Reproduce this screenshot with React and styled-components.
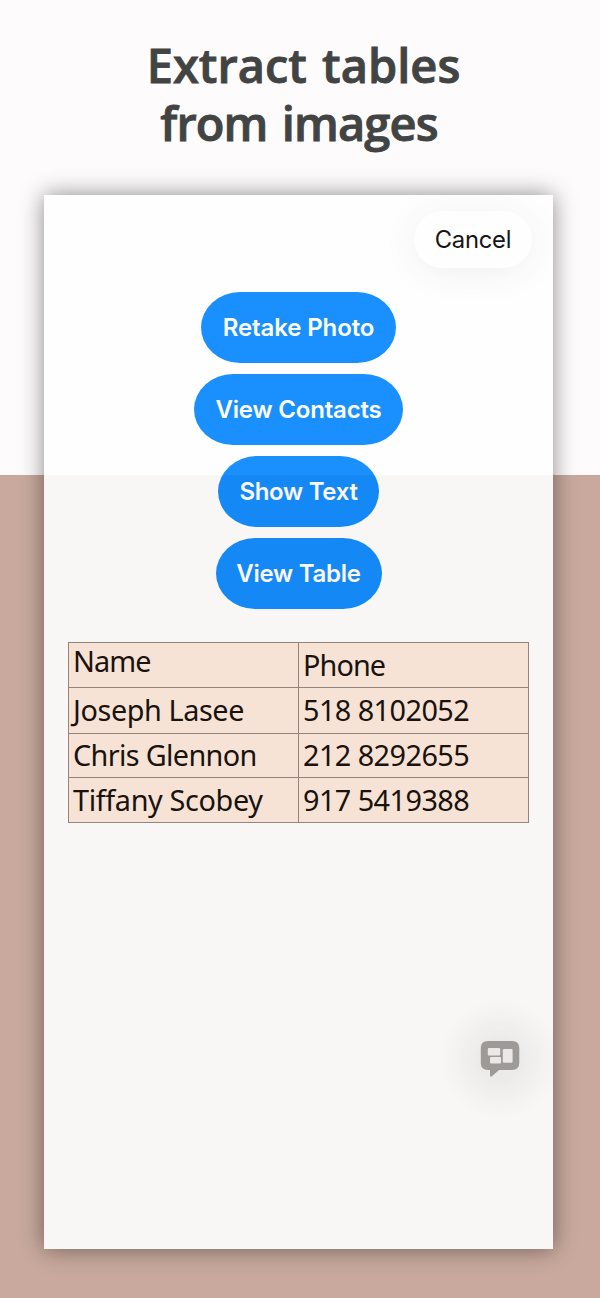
import React from "react";
import styled, { createGlobalStyle } from "styled-components";

const GlobalStyle = createGlobalStyle`
  * { box-sizing: border-box; }
  body { margin: 0; background: #fdfbfc; }
`;

const Page = styled.main`
  width: 600px;
  height: 1298px;
  overflow: hidden;
  padding: 36px 47px 0 44px;
  background: linear-gradient(#fdfbfc 0 475px, #c9a99d 475px);
`;

const Heading = styled.h1`
  margin: 0;
  height: 159px;
  display: flex;
  flex-direction: column;
  align-items: center;
  font: 600 47px/58px "Open Sans", sans-serif;
  color: #424443;
  -webkit-text-stroke: 0.9px #424443;
  word-spacing: 3px;
`;

const HeadingLine = styled.span`
  white-space: nowrap;
  letter-spacing: ${(p) => p.$spacing}px;
  padding-left: ${(p) => p.$shift}px;
`;

const Frame = styled.div`
  width: 509px;
  height: 1054px;
  box-shadow: 0 0 22px rgba(0, 0, 0, 0.45);
`;

const Screen = styled.section`
  height: 100%;
  overflow: hidden;
  opacity: 0.91;
  background: linear-gradient(#fff 0 280px, #fdfffe 280px);
  display: flex;
  flex-direction: column;
  font-family: Inter, sans-serif;
`;

const TopBar = styled.header`
  display: flex;
  justify-content: flex-end;
  padding: 16px 21px 0 0;
  height: 96px;
`;

const CancelButton = styled.button`
  width: 118px;
  height: 57px;
  padding: 0;
  border: 0;
  border-radius: 29px;
  background: #fff;
  color: #000;
  font: 400 23.8px/57px Inter, sans-serif;
  letter-spacing: -0.25px;
  box-shadow: 0 4px 36px rgba(0, 0, 0, 0.07);
`;

const Actions = styled.div`
  display: flex;
  flex-direction: column;
  align-items: center;
  gap: 11px;
  padding-top: 1px;
`;

const ActionButton = styled.button`
  width: ${(p) => p.$width}px;
  height: 71px;
  padding: 0;
  border: 0;
  border-radius: 39px / 35.5px;
  background: #0386ff;
  color: #fff;
  font: 600 24px/71px Inter, sans-serif;
  letter-spacing: ${(p) => p.$spacing}px;
  white-space: nowrap;
`;

const Table = styled.div`
  margin: 33px 0 0 24px;
  width: 461px;
  display: grid;
  grid-template-columns: 229px 229px;
  grid-template-rows: 44px 45px 43px 44px;
  gap: 1px;
  padding: 1px;
  background: #8f8179;
  font: 400 28.8px/40px "Noto Sans", sans-serif;
  color: #080400;
`;

const Cell = styled.div`
  background: #fce9db;
  padding-left: 4px;
  line-height: ${(p) => p.$line}px;
  letter-spacing: ${(p) => p.$spacing}px;
  white-space: nowrap;
`;

const Footer = styled.footer`
  margin-top: auto;
  height: 251px;
  display: flex;
  justify-content: flex-end;
`;

const FeedbackButton = styled.button`
  width: 122px;
  height: 122px;
  margin-right: -8px;
  padding: 0;
  border: 0;
  background: radial-gradient(
    circle closest-side,
    rgba(0, 0, 0, 0.06) 0,
    rgba(0, 0, 0, 0.05) 35%,
    rgba(0, 0, 0, 0.018) 70%,
    rgba(0, 0, 0, 0) 100%
  );
  display: flex;
  align-items: center;
  justify-content: center;
`;

const actions = [
  { label: "Retake Photo", width: 195, spacing: -0.1 },
  { label: "View Contacts", width: 209, spacing: -0.2 },
  { label: "Show Text", width: 161, spacing: -0.3 },
  { label: "View Table", width: 166, spacing: -0.25 },
];

const cells = [
  { text: "Name", line: 35, spacing: -0.9 },
  { text: "Phone", line: 43, spacing: -0.9 },
  { text: "Joseph Lasee", line: 44, spacing: -0.4 },
  { text: "518 8102052", line: 44, spacing: -0.55 },
  { text: "Chris Glennon", line: 42, spacing: -0.65 },
  { text: "212 8292655", line: 42, spacing: -0.55 },
  { text: "Tiffany Scobey", line: 43, spacing: -0.35 },
  { text: "917 5419388", line: 43, spacing: -0.55 },
];

function FeedbackIcon() {
  return (
    <svg width="40" height="38" viewBox="0 0 40 38">
      <path
        fill="#9a9998"
        d="M8 1H32Q39.3 1 39.3 8V23Q39.3 30 32 30H19L12 36.2Q10 37.5 10 35V30H8Q.8 30 .8 23V8Q.8 1 8 1Z"
      />
      <g fill="#efefef">
        <rect x="7.8" y="8" width="12.4" height="7.6" rx="1" />
        <rect x="10" y="17" width="11" height="6.4" rx="1" />
        <rect x="22.8" y="9" width="9.8" height="13.8" rx="1.2" />
      </g>
    </svg>
  );
}

export default function App() {
  return (
    <>
      <GlobalStyle />
      <Page>
        <Heading>
          <HeadingLine $spacing={0} $shift={10}>Extract tables</HeadingLine>
          <HeadingLine $spacing={-0.9} $shift={1}>from images</HeadingLine>
        </Heading>
        <Frame>
          <Screen>
            <TopBar>
              <CancelButton>Cancel</CancelButton>
            </TopBar>
            <Actions>
              {actions.map((a) => (
                <ActionButton key={a.label} $width={a.width} $spacing={a.spacing}>
                  {a.label}
                </ActionButton>
              ))}
            </Actions>
            <Table>
              {cells.map((c) => (
                <Cell key={c.text} $line={c.line} $spacing={c.spacing}>
                  {c.text}
                </Cell>
              ))}
            </Table>
            <Footer>
              <FeedbackButton aria-label="Feedback">
                <FeedbackIcon />
              </FeedbackButton>
            </Footer>
          </Screen>
        </Frame>
      </Page>
    </>
  );
}
